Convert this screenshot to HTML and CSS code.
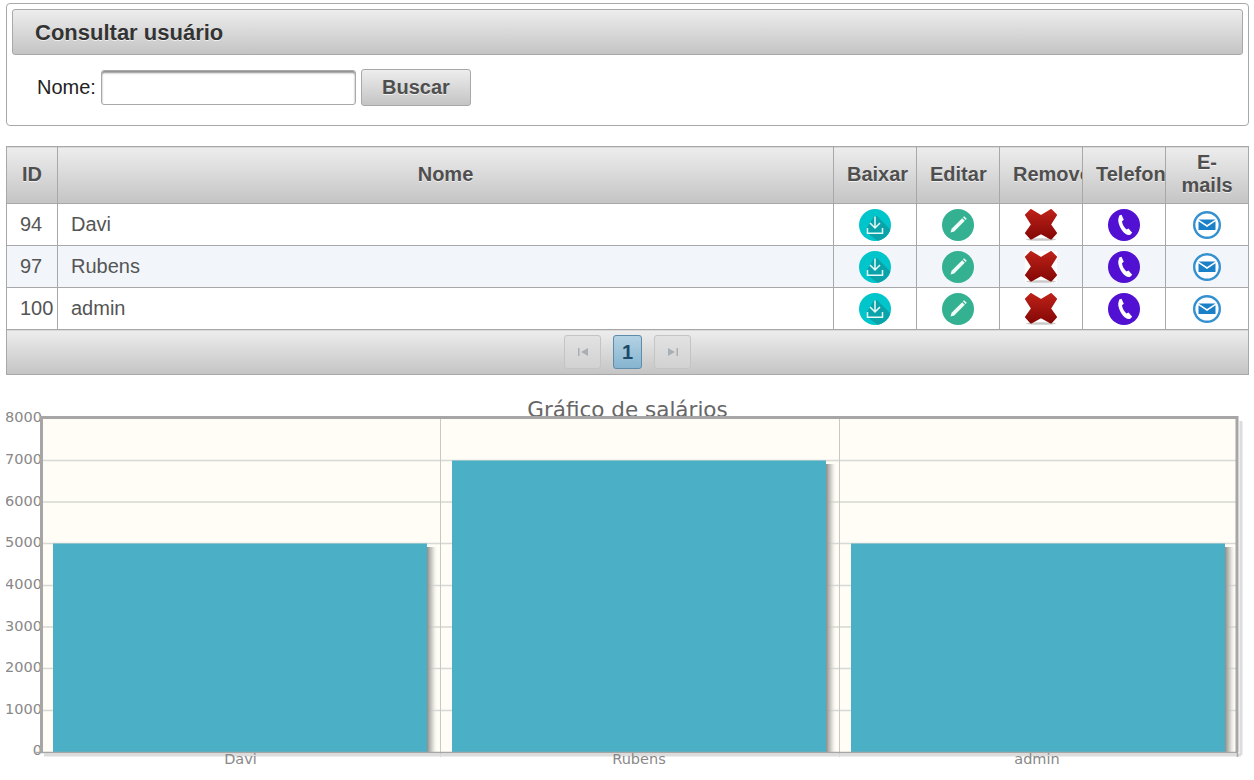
FILE: index.html
```html
<!DOCTYPE html>
<html lang="pt-BR">
<head>
  <meta charset="UTF-8" />
  <meta name="viewport" content="width=device-width, initial-scale=1.0"/>
  <title>Consultar usuário</title>
  <link rel="stylesheet" href="styles.css">
</head>
<body>

  <svg class="icon-defs" width="0" height="0" aria-hidden="true">
    <defs>
      <linearGradient id="xGrad" x1="0" y1="0" x2="0" y2="1">
        <stop offset="0" stop-color="#bc2118"/>
        <stop offset="1" stop-color="#850806"/>
      </linearGradient>
      <linearGradient id="barShadow" x1="0" y1="0" x2="1" y2="0">
        <stop offset="0" stop-color="#8c8c88"/>
        <stop offset="0.5" stop-color="#c4c4c0" stop-opacity="0.8"/>
        <stop offset="1" stop-color="#e8e8e4" stop-opacity="0"/>
      </linearGradient>
      <clipPath id="circleClip"><circle cx="16" cy="16" r="16"/></clipPath>

      <symbol id="ic-download" viewBox="0 0 32 32">
        <circle cx="16" cy="16" r="16" fill="#00c6cc"/>
        <polygon points="15,7 18,7 32,21 32,32 19,32 8,24 8,19" fill="#0aa3aa" clip-path="url(#circleClip)"/>
        <path d="M16 7.500v11M11 14l5 5 5-5" fill="none" stroke="#e8fbfb" stroke-width="1.500"/>
        <path d="M8.500 19v5.200h15V19" fill="none" stroke="#e8fbfb" stroke-width="1.500"/>
      </symbol>

      <symbol id="ic-edit" viewBox="0 0 32 32">
        <circle cx="16" cy="16" r="16" fill="#34b191"/>
        <path d="M8.500 23.500l1.100-3.700L20.200 9.200l2.600 2.600-10.600 10.600z" fill="#f2fbf8"/>
        <path d="M21 8.300l1.100-1.100 2.600 2.600-1.100 1.100z" fill="#f2fbf8"/>
      </symbol>

      <symbol id="ic-remove" viewBox="0 0 32 32">
        <rect width="32" height="32" fill="#fff"/>
        <ellipse cx="16" cy="30.500" rx="15" ry="1.300" fill="#c9c9c9"/>
        <polygon points="6,1 16,7 26,1 31,6 25,15.500 31,24 26,29.500 16,24 6,29.500 1,24 7,15.500 1,6"
          fill="url(#xGrad)" stroke="url(#xGrad)" stroke-width="2" stroke-linejoin="round"/>
      </symbol>

      <symbol id="ic-phone" viewBox="0 0 32 32">
        <circle cx="16" cy="16" r="16" fill="#5210d2"/>
        <path d="M11.200 6.600l2.300-.9 2.300 5.100-1.800 1.500c.2 2.900 2.200 6.600 4.500 8.100l2-1 3.700 4.300-1.700 1.700c-1.200 1-3.200.8-5.100-.6-3.400-2.500-6.300-7.600-7.100-12.300-.4-2.600.9-4.900 1-5.900z" fill="#fff"/>
      </symbol>

      <symbol id="ic-mail" viewBox="0 0 32 32">
        <circle cx="16" cy="16" r="12.800" fill="#fff" stroke="#3490cf" stroke-width="2.400"/>
        <path d="M7.500 10.500h17L16 16z" fill="#1a80c8"/>
        <path d="M7.500 12.300L16 18l8.500-5.700V21h-17z" fill="#1a80c8"/>
      </symbol>
    </defs>
  </svg>

  <section class="panel">
    <h2 class="panel-title">Consultar usuário</h2>
    <form class="search-form">
      <label for="nome">Nome:</label>
      <input id="nome" type="text" class="search-input">
      <button type="button" class="btn">Buscar</button>
    </form>
  </section>

  <table class="data-table">
    <colgroup>
      <col class="col-id"><col class="col-name">
      <col class="col-act"><col class="col-act"><col class="col-act"><col class="col-act"><col class="col-act">
    </colgroup>
    <thead>
      <tr>
        <th>ID</th><th>Nome</th><th>Baixar</th><th>Editar</th><th>Remover</th><th>Telefones</th><th>E-mails</th>
      </tr>
    </thead>
    <tbody>
      <tr>
        <td>94</td><td>Davi</td>
        <td class="act"><svg class="icon"><use href="#ic-download"/></svg></td>
        <td class="act"><svg class="icon"><use href="#ic-edit"/></svg></td>
        <td class="act"><svg class="icon"><use href="#ic-remove"/></svg></td>
        <td class="act"><svg class="icon"><use href="#ic-phone"/></svg></td>
        <td class="act"><svg class="icon"><use href="#ic-mail"/></svg></td>
      </tr>
      <tr class="even">
        <td>97</td><td>Rubens</td>
        <td class="act"><svg class="icon"><use href="#ic-download"/></svg></td>
        <td class="act"><svg class="icon"><use href="#ic-edit"/></svg></td>
        <td class="act"><svg class="icon"><use href="#ic-remove"/></svg></td>
        <td class="act"><svg class="icon"><use href="#ic-phone"/></svg></td>
        <td class="act"><svg class="icon"><use href="#ic-mail"/></svg></td>
      </tr>
      <tr>
        <td>100</td><td>admin</td>
        <td class="act"><svg class="icon"><use href="#ic-download"/></svg></td>
        <td class="act"><svg class="icon"><use href="#ic-edit"/></svg></td>
        <td class="act"><svg class="icon"><use href="#ic-remove"/></svg></td>
        <td class="act"><svg class="icon"><use href="#ic-phone"/></svg></td>
        <td class="act"><svg class="icon"><use href="#ic-mail"/></svg></td>
      </tr>
    </tbody>
    <tfoot>
      <tr>
        <td colspan="7" class="pager-cell">
          <div class="pager">
            <span class="page-btn disabled">
              <svg width="10" height="8" viewBox="0 0 10 8"><path d="M0 0h1.500v8H0zM10 0v8L3 4z" fill="#a9b0b5"/></svg>
            </span>
            <span class="page-num">1</span>
            <span class="page-btn disabled">
              <svg width="10" height="8" viewBox="0 0 10 8"><path d="M0 0v8l7-4zM8.500 0H10v8H8.500z" fill="#a9b0b5"/></svg>
            </span>
          </div>
        </td>
      </tr>
    </tfoot>
  </table>

  <!-- grafico: coordenadas do viewBox iguais as da pagina -->
  <svg class="chart" viewBox="6 395 1243 380" width="1243" height="380">
    <text class="chart-title" x="627.500" y="417">Gráfico de salários</text>

    <g class="y-labels">
      <text x="42" y="422">8000</text>
      <text x="42" y="464">7000</text>
      <text x="42" y="506">6000</text>
      <text x="42" y="547">5000</text>
      <text x="42" y="589">4000</text>
      <text x="42" y="631">3000</text>
      <text x="42" y="672">2000</text>
      <text x="42" y="714">1000</text>
      <text x="42" y="755">0</text>
    </g>

    <rect x="41" y="418" width="1196" height="334" fill="#fffdf6"/>

    <g class="grid">
      <path d="M41 460.500H1237M41 502H1237M41 543.500H1237M41 585.500H1237M41 627H1237M41 668.500H1237M41 710.500H1237"/>
      <path d="M440.500 418V757M839.500 418V757"/>
    </g>

    <rect x="427" y="547" width="10" height="205" fill="url(#barShadow)"/>
    <rect x="826" y="464" width="10" height="288" fill="url(#barShadow)"/>
    <rect x="1225" y="547" width="10" height="205" fill="url(#barShadow)"/>

    <rect class="bar" x="53" y="543.500" width="374" height="208.500"/>
    <rect class="bar" x="452" y="460.500" width="374" height="291.500"/>
    <rect class="bar" x="851" y="543.500" width="374" height="208.500"/>

    <path d="M44 755H1241M1241 421V755" fill="none" stroke="#dcdcdc" stroke-width="3"/>
    <path class="frame" d="M41.500 752V417.500H1237V752"/>
    <path d="M40 752.500H1238M1237.500 752V757M36 752.500H41" fill="none" stroke="#a6a6a6" stroke-width="1.500"/>

    <g class="x-labels">
      <text x="240.500" y="764">Davi</text>
      <text x="639" y="764">Rubens</text>
      <text x="1037" y="764">admin</text>
    </g>
  </svg>

</body>
</html>
```

FILE: styles.css
```css
* {
  box-sizing: border-box;
}

html, body {
  overflow: hidden;
}

body {
  margin: 3px 5px 0 6px;
  font-family: "Liberation Sans", Arial, sans-serif;
  font-size: 20px;
  color: #555;
  background: #fff;
}

.icon-defs {
  position: absolute;
}

.panel {
  height: 123px;
  padding: 5px;
  border: 1px solid #a8a8a8;
  border-radius: 4px;
}

.panel-title {
  height: 46px;
  margin: 0;
  padding: 0 22px;
  font-size: 22px;
  line-height: 46px;
  font-weight: bold;
  color: #333;
  text-shadow: 0 1px 0 rgba(255, 255, 255, 0.7);
  border: 1px solid #a8a8a8;
  border-radius: 3px;
  background: linear-gradient(#ededed, #c4c4c4);
}

.search-form {
  display: flex;
  align-items: center;
  margin-top: 14px;
  padding-left: 25px;
}

.search-form label {
  color: #222;
  margin-right: 5px;
}

.search-input {
  width: 255px;
  height: 35px;
  border: 1px solid #a8a8a8;
  border-radius: 3px;
  background: #fff;
  box-shadow: inset 0 2px 2px #8f8f8f;
}

.btn {
  width: 110px;
  height: 37px;
  margin-left: 5px;
  padding: 0;
  font-family: inherit;
  font-size: 20px;
  font-weight: bold;
  color: #4f4f4f;
  text-shadow: 0 1px 0 rgba(255, 255, 255, 0.7);
  border: 1px solid #a8a8a8;
  border-radius: 3px;
  background: linear-gradient(#ededed, #c4c4c4);
}

.data-table {
  width: 1243px;
  margin-top: 20px;
  border-collapse: collapse;
  table-layout: fixed;
}

.col-id { width: 51px; }
.col-name { width: 776px; }
.col-act { width: 83px; }

.data-table th,
.data-table td {
  border: 1px solid #a8a8a8;
  overflow: hidden;
}

.data-table th {
  height: 57px;
  padding: 0 13px 2px;
  line-height: 23px;
  font-weight: bold;
  color: #4f4f4f;
  text-shadow: 0 1px 0 rgba(255, 255, 255, 0.7);
  background: linear-gradient(#ededed, #c4c4c4);
}

.data-table tbody td {
  height: 42px;
  padding: 0 0 0 13px;
  background: #fff;
}

.data-table tbody tr.even td {
  background: #f2f5fa;
}

.data-table tbody td.act {
  padding: 0;
  text-align: center;
}

.icon {
  display: block;
  width: 32px;
  height: 32px;
  margin: 0 auto;
}

.data-table td.pager-cell {
  height: 45px;
  padding: 0 0 1px;
  background: linear-gradient(#ededed, #c4c4c4);
}

.pager {
  display: flex;
  justify-content: center;
  align-items: center;
  gap: 12px;
}

.page-btn {
  display: flex;
  align-items: center;
  justify-content: center;
  width: 37px;
  height: 34px;
  border: 1px solid #c4c4c4;
  border-radius: 3px;
  background: linear-gradient(#e2e2e2, #d2d2d2);
}

.page-num {
  width: 29px;
  height: 34px;
  line-height: 32px;
  text-align: center;
  font-weight: bold;
  color: #1d4a68;
  border: 1px solid #5e8cab;
  border-radius: 3px;
  background: linear-gradient(#b4d2e4, #86b4cf);
}

.chart {
  display: block;
  margin-top: 20px;
}

.chart text {
  font-family: "DejaVu Sans", sans-serif;
}

.chart .chart-title {
  font-size: 21.5px;
  fill: #666;
  text-anchor: middle;
}

.y-labels text {
  font-size: 14.5px;
  fill: #888;
  text-anchor: end;
}

.x-labels text {
  font-size: 14.5px;
  fill: #888;
  text-anchor: middle;
}

.grid path {
  fill: none;
  stroke: #d8d8d4;
  stroke-width: 1.5;
}

.grid path + path {
  stroke: #c8c8c4;
  stroke-width: 1;
}

.bar {
  fill: #4bb0c6;
}

.frame {
  fill: none;
  stroke: #a6a6a6;
  stroke-width: 3;
}
```
